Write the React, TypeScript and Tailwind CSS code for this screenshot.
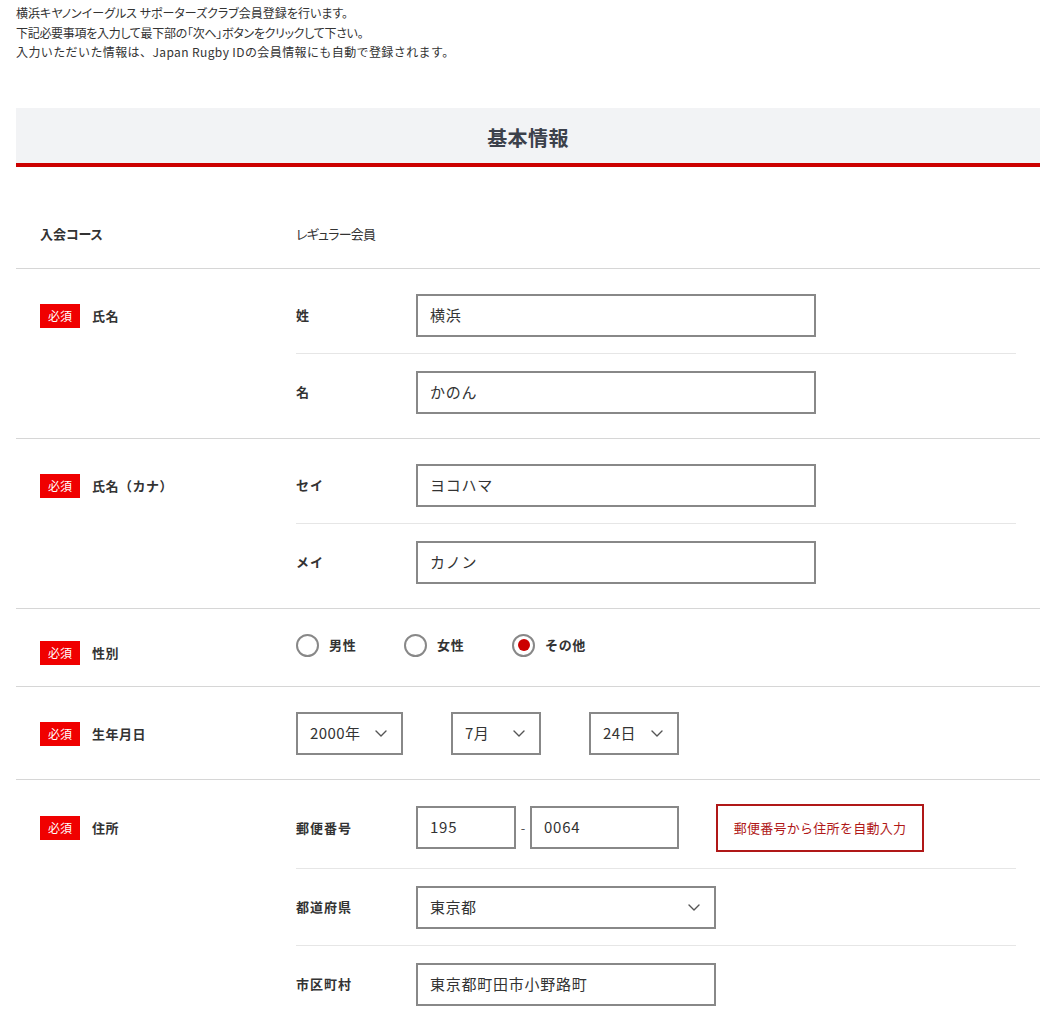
import { ReactNode } from 'react';

const FONT = "font-['Noto_Sans_CJK_JP','Noto_Sans',sans-serif]";

function Badge() {
  return (
    <span className="inline-flex items-center justify-center w-[40px] h-[24px] bg-[#f00000] text-white text-[12px] leading-none">
      必須
    </span>
  );
}

function Chevron() {
  return (
    <svg width="12" height="7" viewBox="0 0 12 7" fill="none" className="shrink-0">
      <path d="M1 1l5 5 5-5" stroke="#555" strokeWidth="1.4" strokeLinecap="round" strokeLinejoin="round" />
    </svg>
  );
}

function TextBox({ value, width = 'w-[400px]' }: { value: string; width?: string }) {
  return (
    <div className={`${width} h-[43px] border-2 border-[#888] flex items-center px-[12px] text-[15px] tracking-[0.05em] text-[#333] bg-white`}>
      {value}
    </div>
  );
}

function SelectBox({ value, width }: { value: string; width: string }) {
  return (
    <div className={`${width} h-[43px] border-2 border-[#888] flex items-center justify-between pl-[12px] pr-[14px] text-[15px] tracking-[0.03em] text-[#333] bg-white`}>
      <span>{value}</span>
      <Chevron />
    </div>
  );
}

function SubRow({ label, children, last = false }: { label: string; children: ReactNode; last?: boolean }) {
  return (
    <div className={`flex items-center pt-[17px] pb-[16px] ${last ? '' : 'border-b border-[#e6e6e6]'}`}>
      <div className="w-[120px] text-[13px] font-bold tracking-[0.08em] text-[#333]">{label}</div>
      {children}
    </div>
  );
}

function Row({
  label,
  required = true,
  labelPt = 'pt-[35px]',
  children,
  bodyClass = 'py-2'
}: {
  label: string;
  required?: boolean;
  labelPt?: string;
  children: ReactNode;
  bodyClass?: string;
}) {
  return (
    <div className="flex border-b border-[#d6d6d6]">
      <div className={`w-[280px] pl-6 ${labelPt} flex items-start`}>
        <div className="flex items-center gap-3 h-[24px]">
          {required && <Badge />}
          <span className="text-[13px] font-bold tracking-[0.04em] text-[#333]">{label}</span>
        </div>
      </div>
      <div className={`flex-1 pr-6 ${bodyClass}`}>{children}</div>
    </div>
  );
}

function Radio({ label, checked = false }: { label: string; checked?: boolean }) {
  return (
    <label className="w-[108px] flex items-center gap-[10px]">
      <span className="w-[23px] h-[23px] rounded-full border-2 border-[#888] flex items-center justify-center bg-white">
        {checked && <span className="w-[12px] h-[12px] rounded-full bg-[#cc0000]" />}
      </span>
      <span className="text-[13px] font-bold tracking-[0.05em] text-[#333]">{label}</span>
    </label>
  );
}

export default function App() {
  return (
    <div className={`${FONT} bg-white min-h-screen text-[#333] pl-4 pr-px pt-[3px]`}>
      <div className="text-[12px] leading-[19.5px] text-[#333]">
        <p className="[font-feature-settings:'palt']">横浜キヤノンイーグルス サポーターズクラブ会員登録を行います。</p>
        <p className="[font-feature-settings:'palt'] tracking-[-0.3px]">下記必要事項を入力して最下部の「次へ」ボタンをクリックして下さい。</p>
        <p className="tracking-[0.4px]">入力いただいた情報は、Japan Rugby IDの会員情報にも自動で登録されます。</p>
      </div>

      {/* 見出し */}
      <div className="mt-[46px] bg-[#f2f3f5] border-b-4 border-[#cc0000] pt-[16px] pb-[11px] text-center">
        <h2 className="text-[20px] leading-[28px] font-bold tracking-[0.02em] text-[#3c414b]">基本情報</h2>
      </div>

      <div className="pt-[33px]">
        {/* 入会コース */}
        <div className="flex items-center h-[69px] border-b border-[#d6d6d6]">
          <div className="w-[280px] pl-6 text-[13px] font-bold [font-feature-settings:'palt'] text-[#333]">入会コース</div>
          <div className="text-[13px] [font-feature-settings:'palt'] tracking-[-0.06em] text-[#333]">レギュラー会員</div>
        </div>

        <Row label="氏名">
          <SubRow label="姓">
            <TextBox value="横浜" />
          </SubRow>
          <SubRow label="名" last>
            <TextBox value="かのん" />
          </SubRow>
        </Row>

        <Row label="氏名（カナ）">
          <SubRow label="セイ">
            <TextBox value="ヨコハマ" />
          </SubRow>
          <SubRow label="メイ" last>
            <TextBox value="カノン" />
          </SubRow>
        </Row>

        <Row label="性別" labelPt="pt-[32px]" bodyClass="pt-[25px] pb-[29px]">
          <div className="flex items-center h-[23px]">
            <Radio label="男性" />
            <Radio label="女性" />
            <Radio label="その他" checked />
          </div>
        </Row>

        <Row label="生年月日">
          <div className="flex items-center gap-[48px] pt-[17px] pb-[16px]">
            <SelectBox value="2000年" width="w-[107px]" />
            <SelectBox value="7月" width="w-[90px]" />
            <SelectBox value="24日" width="w-[90px]" />
          </div>
        </Row>

        <Row label="住所" labelPt="pt-[36px]" bodyClass="pt-[7px] pb-2">
          <SubRow label="郵便番号">
            <div className="flex items-center">
              <TextBox value="195" width="w-[100px]" />
              <span className="w-[14px] text-center text-[13px] text-[#555]">-</span>
              <TextBox value="0064" width="w-[149px]" />
              <button className="ml-[37px] w-[208px] h-[48px] border-2 border-[#b01818] text-[#b01818] text-[13px] tracking-[0.02em] bg-white">
                郵便番号から住所を自動入力
              </button>
            </div>
          </SubRow>
          <SubRow label="都道府県">
            <SelectBox value="東京都" width="w-[300px]" />
          </SubRow>
          <SubRow label="市区町村" last>
            <TextBox value="東京都町田市小野路町" width="w-[300px]" />
          </SubRow>
        </Row>
      </div>
    </div>
  );
}
